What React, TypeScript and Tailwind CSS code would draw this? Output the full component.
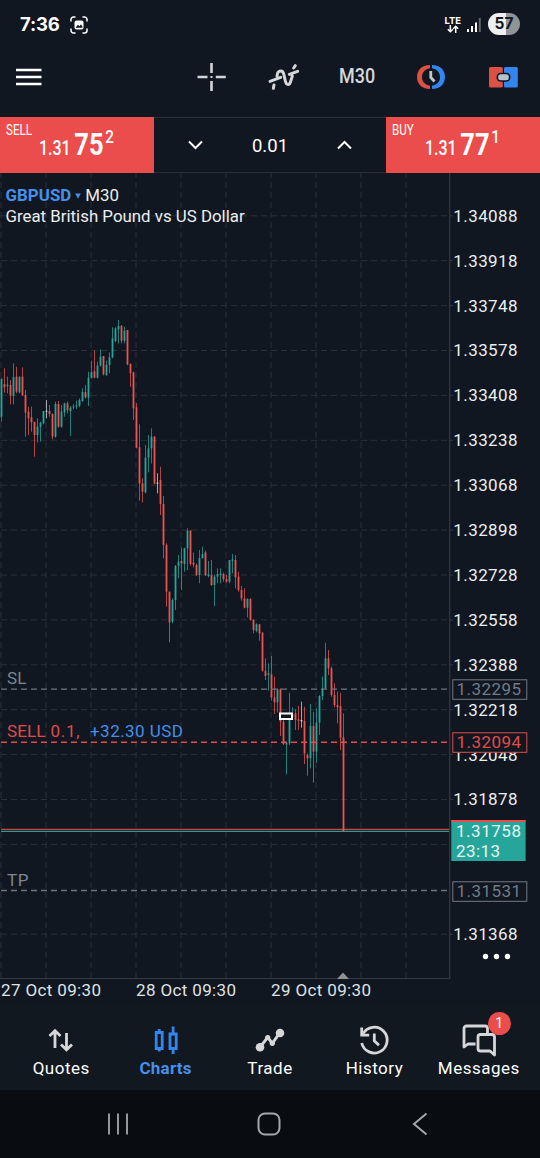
import type { ReactNode } from 'react';

type Candle = [kind: 'g' | 'r' | 'w', high: number, top: number, bottom: number, low: number];

// Candles are grouped by the origin their offsets are measured from, three units per pixel
const groups: { origin: number; candles: Candle[] }[] = [
  {
    origin: 310,
    candles: [
      ['g', 205, 207, 320, 335], ['r', 175, 222, 232, 248], ['g', 200, 224, 228, 250], ['r', 210, 225, 257, 283],
      ['g', 160, 202, 257, 283], ['r', 170, 200, 245, 250], ['g', 200, 200, 247, 250], ['r', 172, 200, 255, 258],
      ['r', 240, 255, 308, 380], ['r', 290, 305, 325, 375], ['r', 290, 322, 337, 365], ['r', 335, 336, 375, 440],
      ['g', 325, 350, 375, 398], ['g', 335, 338, 350, 395], ['g', 303, 303, 340, 343], ['w', 270, 302, 305, 325],
      ['r', 285, 303, 312, 320], ['r', 310, 312, 380, 388], ['g', 275, 282, 380, 383], ['r', 273, 282, 350, 353],
      ['g', 285, 305, 350, 353], ['g', 278, 280, 307, 320], ['r', 275, 280, 300, 310], ['g', 288, 293, 303, 378],
      ['g', 282, 289, 292, 298], ['g', 272, 286, 289, 297], ['g', 265, 270, 287, 292], ['g', 235, 246, 273, 275],
      ['r', 225, 246, 262, 266], ['g', 185, 203, 263, 288], ['g', 152, 186, 203, 206], ['r', 122, 184, 203, 205],
      ['g', 155, 167, 203, 205], ['g', 118, 140, 167, 170], ['r', 138, 138, 193, 196], ['g', 152, 165, 195, 198],
      ['g', 127, 142, 165, 190], ['g', 52, 85, 142, 145], ['g', 52, 55, 93, 97], ['g', 30, 48, 58, 100],
      ['r', 45, 48, 92, 100], ['g', 50, 62, 92, 100], ['r', 60, 60, 163, 166], ['r', 160, 162, 190, 230],
      ['r', 185, 187, 295, 330], ['r', 280, 292, 413, 415], ['r', 343, 412, 520, 572], ['r', 505, 520, 545, 577],
      ['g', 405, 443, 547, 550], ['g', 375, 415, 443, 487], ['g', 355, 380, 415, 460], ['r', 378, 380, 521, 523],
      ['w', 490, 518, 521, 550], ['r', 470, 510, 582, 615],
    ],
  },
  {
    origin: 480,
    candles: [
      ['r', 48, 72, 195, 235], ['r', 190, 195, 335, 380], ['r', 335, 335, 427, 487], ['g', 355, 360, 425, 430],
      ['g', 255, 258, 360, 390], ['g', 225, 245, 258, 295], ['r', 203, 243, 250, 330], ['g', 203, 205, 252, 275],
      ['g', 145, 152, 205, 270], ['r', 150, 152, 252, 257], ['r', 218, 248, 254, 262], ['r', 250, 255, 285, 288],
      ['g', 210, 234, 285, 310], ['g', 200, 222, 234, 236], ['r', 212, 217, 285, 288], ['g', 243, 283, 288, 292],
      ['r', 240, 285, 315, 318], ['g', 285, 290, 315, 378], ['g', 265, 282, 290, 310], ['g', 265, 281, 285, 310],
      ['r', 278, 282, 297, 305], ['r', 285, 297, 305, 308], ['g', 240, 240, 305, 310], ['g', 222, 238, 242, 280],
      ['r', 225, 240, 292, 325], ['r', 275, 290, 330, 335], ['r', 318, 330, 355, 362], ['r', 325, 355, 383, 385],
      ['g', 355, 357, 383, 412], ['r', 355, 357, 420, 422], ['r', 418, 420, 450, 460], ['g', 430, 433, 453, 457],
      ['r', 432, 433, 460, 482],
    ],
  },
  {
    origin: 620,
    candles: [
      ['r', 37, 38, 152, 155], ['r', 115, 152, 168, 180], ['g', 130, 160, 165, 212], ['r', 108, 163, 232, 242],
      ['r', 170, 232, 247, 282], ['g', 205, 208, 247, 277], ['r', 205, 208, 305, 348], ['r', 300, 305, 372, 375],
      ['g', 365, 368, 374, 463], ['g', 218, 285, 370, 375], ['g', 262, 283, 290, 300], ['r', 268, 280, 300, 330],
      ['r', 258, 298, 302, 330], ['w', 245, 300, 304, 323], ['r', 260, 303, 400, 432], ['r', 400, 405, 415, 467],
      ['g', 252, 318, 415, 445], ['r', 275, 318, 395, 488], ['g', 265, 308, 395, 428], ['g', 225, 228, 308, 345],
      ['g', 170, 205, 228, 240], ['g', 68, 115, 205, 207], ['r', 90, 115, 145, 165], ['r', 140, 145, 225, 230],
      ['r', 190, 225, 255, 262], ['r', 215, 255, 262, 310], ['r', 218, 258, 353, 390], ['r', 280, 352, 633, 633],
    ],
  },
];

const candles = groups.flatMap(({ origin, candles }) =>
  candles.map(([kind, ...ys]) => ({ kind, ys: ys.map((y) => origin + y / 3) })),
);

const candleColors = { g: '#26a69a', r: '#ef5350', w: '#d5d9dc' };

const prices = [
  '1.34088', '1.33918', '1.33748', '1.33578', '1.33408', '1.33238', '1.33068', '1.32898', '1.32728',
  '1.32558', '1.32388', '1.32218', '1.32048', '1.31878', '', '', '1.31368',
];

const dates = ['27 Oct 09:30', '28 Oct 09:30', '29 Oct 09:30'];

const priceY = (i: number) => 216 + i * 44.9;

function StatusBar() {
  return (
    <div className="flex h-12 items-center pl-5 pr-5 text-white">
      <span className="w-[42px] font-[Inter,sans-serif] text-[18.5px] font-bold leading-none tracking-[-0.2px]">7:36</span>
      <svg className="ml-2 mt-px" width="18" height="18" viewBox="0 0 18 18" fill="none" stroke="#fff" strokeWidth="1.5" strokeLinecap="round">
        <path d="M1 5V3.5A2.5 2.5 0 0 1 3.5 1H5M13 1h1.500A2.500 2.500 0 0 1 17 3.500V5M17 13v1.500A2.500 2.500 0 0 1 14.500 17H13M5 17H3.500A2.500 2.500 0 0 1 1 14.500V13" />
        <rect x="4.500" y="4.500" width="9" height="9" rx="2" fill="#fff" stroke="none" />
        <path d="M5.800 11.300 8 8.800l1.500 1.500L11 8.300l1.500 2.500v.9H5.800z" fill="#101720" stroke="none" />
      </svg>
      <div className="ml-auto flex items-center">
        <div className="flex flex-col items-center">
          <span className="font-[Inter,sans-serif] text-[9.5px] font-bold leading-[9px]">LTE</span>
          <svg width="12" height="8" viewBox="0 0 12 8" fill="none" stroke="#fff" strokeWidth="1.5">
            <path d="M3.300 0v6.500M.8 4.200l2.500 2.500 2.500-2.500M8.700 8V1.300M6.200 3.800l2.500-2.500 2.500 2.500" />
          </svg>
        </div>
        <svg className="ml-1.5 mt-px" width="14" height="14" viewBox="0 0 14 14">
          <path d="M0 11h2v3H0zM4 8h2v6H4zM8 4.500h2V14H8z" fill="#fff" />
          <path d="M11.800 0h2v14h-2z" fill="#5d646b" />
        </svg>
        <span className="ml-[7px] flex h-[22px] w-8 items-center justify-center rounded-full bg-linear-to-r from-[#eeefef] from-55% to-[#909499] to-55% font-[Inter,sans-serif] text-[15.5px] font-bold text-[#141a22]">
          57
        </span>
      </div>
    </div>
  );
}

function Toolbar() {
  return (
    <header className="flex h-[69px] items-center pb-[11px] pl-4 pr-[22px]">
      <svg width="26" height="18" viewBox="0 0 26 18" fill="#fff">
        <path d="M0 .8h25.500v2.500H0zM0 7.800h25.500v2.500H0zM0 14.800h25.500v2.500H0z" />
      </svg>
      {/* Crosshair */}
      <svg className="ml-[155px]" width="30" height="30" viewBox="0 0 30 30" fill="none" stroke="#d2d5d8" strokeWidth="2.600">
        <path d="M14.500 1v10M14.500 19v10M.5 15h10M18.800 15h10" />
        <path d="M13.500 15h2" strokeWidth="2" />
      </svg>
      {/* Indicators */}
      <svg className="ml-[33px]" width="50" height="45" viewBox="0 0 150 135" fill="none" stroke="#d5d7d9" strokeWidth="9" strokeLinecap="round" strokeLinejoin="round">
        <path d="M30 79 62 67M88 58 113 49M40 100 42 90M51 64C52 44 69 43 72 60L76 78C79 92 89 91 92 79L97 63M101 39 106 32" />
      </svg>
      <span className="ml-[29px] w-[37px] origin-left scale-x-[0.92] font-medium text-[19.5px] leading-none text-[#d5d7d9]">M30</span>
      {/* Trading hours */}
      <svg className="ml-[39.5px]" width="30" height="26" viewBox="0 0 30 26">
        <path d="M14 1C5.500 1 1 6.500 1 13s4.500 12 13 12v-3.200C9 21 6 17.500 6 13s3-8 8-8.800z" fill="#dd5044" />
        <path d="M16 1c8.500 0 13 5.500 13 12s-4.500 12-13 12v-3.200c5-.8 8-4.300 8-8.800s-3-8-8-8.800z" fill="#3385f0" />
        <path d="M14.800 7v6.500l3.700 4" fill="none" stroke="#bfc9ca" strokeWidth="2.800" />
      </svg>
      {/* One-click trading */}
      <svg className="ml-auto" width="29" height="21" viewBox="0 0 29 21">
        <rect width="13.800" height="20.500" rx="1.500" fill="#dd5044" />
        <rect x="15" width="13.800" height="20.500" rx="1.500" fill="#3385f0" />
        <rect x="7.500" y="5.800" width="14" height="9" rx="4.200" fill="#101720" />
        <rect x="9.200" y="7.300" width="10.600" height="6" rx="2.500" fill="#b7c3c8" />
      </svg>
    </header>
  );
}

function PriceButton({ side, base, pips, point }: { side: string; base: string; pips: string; point: string }) {
  return (
    <button className="relative h-14 w-[153.700px] bg-[#ea4d4b] text-left text-white">
      <span className="absolute left-[5.500px] top-[6px] origin-left scale-x-[0.83] text-[14px] leading-none">{side}</span>
      <span className="relative top-px flex origin-left scale-x-[0.82] items-baseline pl-[47.500px]">
        <span className="text-[19.500px] font-medium">{base}</span>
        <span className="ml-[4.500px] text-[31px] font-bold leading-none">{pips}</span>
        <span className="relative -top-3 ml-[2px] text-[18.500px] font-medium leading-none">{point}</span>
      </span>
    </button>
  );
}

function TradePanel() {
  return (
    <div className="flex h-14 justify-between">
      <PriceButton side="SELL" base="1.31" pips="75" point="2" />
      <div className="flex flex-1 items-center justify-between border-y border-[#272f38] px-[34.500px] text-white">
        <svg width="15" height="10" viewBox="0 0 15 10" fill="none" stroke="currentColor" strokeWidth="2">
          <path d="m1 1.500 6.500 6.500L14 1.500" />
        </svg>
        <span className="pt-[3px] text-[18.500px]">0.01</span>
        <svg width="15" height="10" viewBox="0 0 15 10" fill="none" stroke="currentColor" strokeWidth="2">
          <path d="M1 8.500 7.500 2 14 8.500" />
        </svg>
      </div>
      <PriceButton side="BUY" base="1.31" pips="77" point="1" />
    </div>
  );
}

function PriceTag({ y, color, text }: { y: number; color: string; text: string }) {
  return (
    <>
      <rect x="452.800" y={y - 9.700} width="74" height="19.500" fill="#101720" stroke={color} />
      <text x="456.500" y={y + 5.500} fill={color} textLength="64.500">{text}</text>
    </>
  );
}

function Chart() {
  return (
    <main className="relative h-[832px]">
      <svg className="block" width="540" height="832" viewBox="0 173 540 832" fontSize="17">
        <g stroke="#28313a" strokeDasharray="6 4">
          {Array.from({ length: 10 }, (_, i) => (
            <path key={i} d={`M${1 + i * 45} 172V978`} />
          ))}
          {prices.map((_, i) => (
            <path key={i} d={`M1 ${priceY(i) - 0.2}H449`} />
          ))}
        </g>
        <path d="M449.700 172V978.500H0" fill="none" stroke="#323a44" strokeWidth="1.200" />

        {candles.map(({ kind, ys: [high, top, bottom, low] }, i) => (
          <g key={i} fill={candleColors[kind]}>
            <rect x={1 + i * 3} y={high} width="1" height={low - high} opacity="0.75" />
            <rect x={0.600 + i * 3} y={top} width="1.800" height={Math.max(bottom - top, 1)} />
          </g>
        ))}

        {/* Order levels */}
        <path d="M1 689.200H449" stroke="#6d7680" strokeWidth="1.300" strokeDasharray="6 4" />
        <path d="M1 742.200H449" stroke="#e04b4b" strokeWidth="1.500" strokeDasharray="6 4" />
        <path d="M1 890.700H449" stroke="#6d7680" strokeWidth="1.300" strokeDasharray="6 4" />
        <path d="M1 829.300H449" stroke="#ef5350" />
        <path d="M1 831.300H449" stroke="#4fb0a8" />
        <g fill="#7c8791">
          <text x="7" y="684.400" textLength="19.500">SL</text>
          <text x="7" y="886.400" textLength="21.500">TP</text>
        </g>
        <text x="7" y="737" fill="#e04b4b" textLength="38.500">SELL</text>
        <text x="50.500" y="737" fill="#e04b4b" textLength="29">0.1,</text>
        <text x="90" y="737" fill="#468fea" textLength="93">+32.30 USD</text>
        <rect x="280" y="713.500" width="12" height="5.500" fill="#101720" stroke="#fff" strokeWidth="2" />

        {/* Price axis */}
        <g fill="#eceeef">
          {prices.map((price, i) => price && (
            <g key={price}>
              <path d={`M450 ${priceY(i) - 0.2}h3`} stroke="#323a44" />
              <text x="453.300" y={priceY(i) + 5.700} textLength="64.300">{price}</text>
            </g>
          ))}
        </g>
        <PriceTag y={689.500} color="#737b87" text="1.32295" />
        <PriceTag y={742.500} color="#e04b4b" text="1.32094" />
        <PriceTag y={891.500} color="#737b87" text="1.31531" />
        <rect x="451.300" y="820" width="74.300" height="41" fill="#26a69a" />
        <rect x="451.300" y="820" width="74.300" height="2" fill="#ea4d4b" />
        <g fill="#e8f6f4">
          <text x="456" y="837.400" textLength="65">1.31758</text>
          <text x="456" y="857.200" textLength="44">23:13</text>
        </g>
        <g fill="#fff">
          <circle cx="485.500" cy="956.500" r="2.700" />
          <circle cx="496.500" cy="956.500" r="2.700" />
          <circle cx="507.500" cy="956.500" r="2.700" />
        </g>

        {/* Time axis */}
        <path d="m337 979 6-6.500 6 6.500z" fill="#8f9295" />
        <g fill="#dfe2e4">
          {dates.map((date, i) => (
            <text key={date} x={1 + i * 135} y="996.400" textLength="100">{date}</text>
          ))}
        </g>
      </svg>

      <div className="absolute left-[5.500px] top-[12px] text-[16.850px] leading-[21px] text-[#eceeef]">
        <div className="flex items-center">
          <span className="font-bold tracking-[0.05px] text-[#468fea]">GBPUSD</span>
          <svg className="mx-[4px]" width="6" height="6" viewBox="0 0 6 6" fill="#468fea">
            <path d="M.2.5h5.600L3 5.800z" />
          </svg>
          <span>M30</span>
        </div>
        <div>Great British Pound vs US Dollar</div>
      </div>
    </main>
  );
}

function Tab({ label, active, badge, children }: { label: string; active?: boolean; badge?: number; children: ReactNode }) {
  return (
    <a className={`relative flex flex-1 flex-col items-center pt-[17px] ${active ? 'font-bold text-[#468fea]' : 'font-normal text-white'}`}>
      <svg width="44" height="36" viewBox="0 0 44 36" fill="none" stroke={active ? '#3385f0' : '#d5d7d9'} strokeWidth="2.800">
        {children}
      </svg>
      <span className={`text-[17px] leading-5 ${active ? 'tracking-[0.25px]' : 'tracking-[0.5px]'}`}>{label}</span>
      {badge && (
        <span className="absolute left-[61px] top-[6.500px] flex size-[23px] items-center justify-center rounded-full bg-[#ea4d4b] text-[14px] font-normal text-white">
          {badge}
        </span>
      )}
    </a>
  );
}

function TabBar() {
  return (
    <nav className="flex h-[85px] bg-[#111820] px-[9px]">
      <Tab label="Quotes">
        <path d="M16 26V9.500M10.500 14 16 8.800 21.500 14M27.500 11v16M22 22.500l5.500 5.200 5.500-5.200" />
      </Tab>
      <Tab label="Charts" active>
        <path d="M12.200 10.500h6v16h-6zM15.200 7v3.500M15.200 26.500v3M26 12h6.200v14.500H26zM29.100 4.500V12M29.100 26.500V32" />
      </Tab>
      <Tab label="Trade">
        <path d="m12 25.300 7.700-10 4.600 6L32 10.700" strokeWidth="3" />
        <g fill="#d5d7d9" stroke="none">
          <circle cx="12" cy="25.300" r="4.300" />
          <circle cx="19.700" cy="15.500" r="2.600" />
          <circle cx="24.300" cy="21.300" r="2.600" />
          <circle cx="32" cy="11" r="4.300" />
        </g>
      </Tab>
      <Tab label="History">
        <path d="M9.700 21A12.900 12.900 0 1 0 11 11.800" />
        <path d="M9.700 5.500v7.700h7.500M22.300 11.500v7.300l4.700 4.500" />
      </Tab>
      <Tab label="Messages" badge={1}>
        <g strokeLinejoin="round">
          <path d="M18.500 22H11l-4 3V6.500A2.500 2.500 0 0 1 9.500 4H28a2.500 2.500 0 0 1 2.500 2.500V11" />
          <path d="M23.500 12.500H35a2.500 2.500 0 0 1 2.500 2.500v18L33 29h-9.500a2.500 2.500 0 0 1-2.500-2.500V15a2.500 2.500 0 0 1 2.500-2.500z" />
        </g>
      </Tab>
    </nav>
  );
}

function SystemBar() {
  return (
    <footer className="flex h-[68px] items-center bg-[#090d11] pl-[107px] text-[#a5a8aa]">
      <svg width="22" height="22" viewBox="0 0 22 22" fill="none" stroke="currentColor" strokeWidth="1.800">
        <path d="M2 .5v21M11 .5v21M20 .5v21" />
      </svg>
      <svg className="ml-[128px]" width="24" height="24" viewBox="0 0 24 24" fill="none" stroke="currentColor" strokeWidth="2">
        <rect x="1.500" y="1.500" width="21" height="21" rx="6.500" />
      </svg>
      <svg className="ml-[131px]" width="16" height="24" viewBox="0 0 16 24" fill="none" stroke="currentColor" strokeWidth="2">
        <path d="M14.500 1.500 2 12l12.500 10.500" />
      </svg>
    </footer>
  );
}

export default function App() {
  return (
    <div className="flex h-[1158px] w-[540px] flex-col overflow-hidden bg-[#101720] font-[Roboto,sans-serif]">
      <StatusBar />
      <Toolbar />
      <TradePanel />
      <Chart />
      <TabBar />
      <SystemBar />
    </div>
  );
}
